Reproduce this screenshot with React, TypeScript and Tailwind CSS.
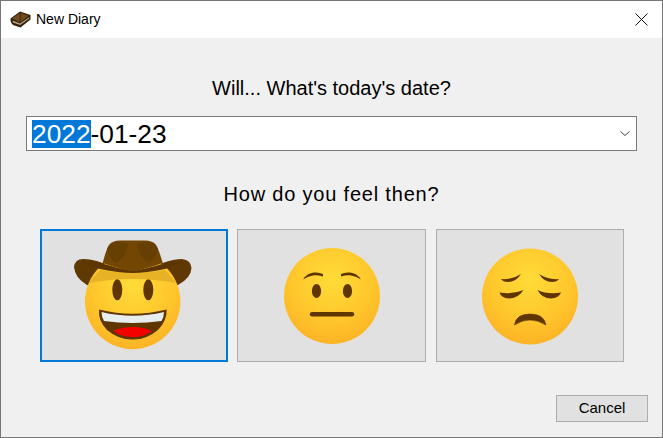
// New Diary dialog
const UI_FONT = "font-['Liberation_Sans',Arial,sans-serif]";

function BookIcon() {
    return (
        <svg width="21" height="17" viewBox="0 0 21 17" className="shrink-0">
            <path d="M0.5 7.5 L10 0.5 L20.5 4 L20.5 8.5 L10.5 16.5 L3 14 Q0 11 0.5 7.5 Z" fill="#33200c" />
            <path d="M2 7.5 L10.3 1.7 L19 4.8 L10 11.5 Z" fill="#6f4a1e" />
            <path d="M2.5 9.5 L10 12.6 L19.2 6.3 L19.2 7.6 L10.2 14 L3 11.6 Z" fill="#b9a688" />
            <path d="M10.3 2 L10 11.2" stroke="#33200c" strokeWidth="0.8" fill="none" />
        </svg>
    );
}

function FaceDefs({ id }: { id: string }) {
    return (
        <defs>
            <radialGradient id={id} cx="50%" cy="32%" r="72%">
                <stop offset="0%" stopColor="#ffdc38" />
                <stop offset="60%" stopColor="#ffc62c" />
                <stop offset="100%" stopColor="#fbb024" />
            </radialGradient>
        </defs>
    );
}

function CowboyFace() {
    return (
        <svg viewBox="0 0 120 120" className="w-[120px] h-[120px]">
            <FaceDefs id="cowboy" />
            {/* brim behind the face */}
            <path d="M0 31 Q1 23 9 23 Q18 23 28.7 27 L88.7 27 Q100 23 108 23 Q117 24 117.5 32 Q117 42 104 49 L13 49 Q1 42 0 31 Z" fill="#5f3802" />
            <circle cx="58.7" cy="65.5" r="47.7" fill="url(#cowboy)" />
            <path d="M26 34 Q58.7 40 91 34 Q98 41 102 47 Q58.7 39 15 47 Q20 40 26 34 Z" fill="#e8b226" />
            {/* brim front */}
            <path d="M7 27 Q18 24 30 28 Q45 33 58.7 35 Q72 33 88 28 Q100 24 110 27 Q100 30 91 33 Q72 37 58.7 37 Q45 37 26 33 Q16 29 7 27 Z" fill="#5c3502" />
            {/* crown */}
            <path d="M28.7 27 Q32 14 35 9 Q38 4.5 46 4.5 L71 4.5 Q79 4.5 82 9 Q85 14 88.7 27 Q72 33 58.7 35.5 Q45 33 28.7 27 Z" fill="#744604" />
            <path d="M33 13 Q36 6 44 6 Q50 6 54 8 Q52 22 42 27 Q36 24 33 13 Z M63 8 Q68 6 73 6 Q81 6 84 13 Q81 24 75 27 Q65 22 63 8 Z" fill="#683f03" />
            <ellipse cx="43.3" cy="53.8" rx="5" ry="10.5" fill="#5f3600" />
            <ellipse cx="74.3" cy="53.8" rx="5" ry="10.5" fill="#5f3600" />
            <path d="M25 73.5 Q58.7 82 92.7 73.5 Q93 85 84 94 Q72 104 58.7 103.5 Q45 104 33 94 Q24 85 25 73.5 Z" fill="#5f3600" />
            <path d="M27.5 76 Q58.7 83.5 90 76 Q90 81 87.5 85 Q58.7 89 30 85 Q27.5 81 27.5 76 Z" fill="#e8eef0" />
            <path d="M39.3 95 Q47 91 58.7 91 Q70 91 77.7 95 Q70 101 58.7 101 Q47 101 39.3 95 Z" fill="#f40000" />
        </svg>
    );
}

function NeutralFace() {
    return (
        <svg viewBox="0 0 120 120" className="w-[120px] h-[120px]">
            <FaceDefs id="neutral" />
            <circle cx="60" cy="60" r="48" fill="url(#neutral)" />
            <path d="M31 43.5 Q35 37 42 36.5 Q47 36 51 38 L51 40.5 Q46 39 42 39.3 Q36 40 31 43.5 Z" fill="#5f3600" />
            <path d="M89 43.5 Q85 37 78 36.5 Q73 36 69 38 L69 40.5 Q74 39 78 39.3 Q84 40 89 43.5 Z" fill="#5f3600" />
            <ellipse cx="44.5" cy="55" rx="4.6" ry="7" fill="#5f3600" />
            <ellipse cx="75.5" cy="55" rx="4.6" ry="7" fill="#5f3600" />
            <rect x="37.8" y="76" width="44.4" height="4.6" rx="2.3" fill="#5f3600" />
        </svg>
    );
}

function PensiveFace() {
    return (
        <svg viewBox="0 0 120 120" className="w-[120px] h-[120px]">
            <FaceDefs id="pensive" />
            <circle cx="60" cy="60.5" r="48" fill="url(#pensive)" />
            <path d="M31 43 Q42 44 51 38 Q46 46 38 46 Q33 46 31 43 Z" fill="#5f3600" />
            <path d="M89 43 Q78 44 69 38 Q74 46 82 46 Q87 46 89 43 Z" fill="#5f3600" />
            <path d="M29.5 56.5 Q42 59 53.5 54 Q48 62.5 39 62.5 Q31 62 29.5 56.5 Z" fill="#5f3600" />
            <path d="M91 56.5 Q78 59 67.5 54 Q72 62.5 81 62.5 Q89 62 91 56.5 Z" fill="#5f3600" />
            <path d="M44.5 89 Q46 78 60 78 Q74 78 76 89 Q68 84 60 84 Q52 84 44.5 89 Z" fill="#5f3600" stroke="#5f3600" strokeWidth="0.6" strokeLinejoin="round" />
        </svg>
    );
}

export default function App() {
    return (
        <div className={`w-[663px] h-[438px] flex flex-col bg-[#f0f0f0] border border-[#767676] ${UI_FONT}`}>
            {/* title bar */}
            <div className="h-[37px] bg-white flex items-center pl-[9px] pr-[14px] shrink-0">
                <BookIcon />
                <span className="ml-[5px] text-[14px] text-black">New Diary</span>
                <svg width="13" height="13" viewBox="0 0 13 13" className="ml-auto">
                    <path d="M0.5 0.5 L12.5 12.5 M12.5 0.5 L0.5 12.5" stroke="#111" strokeWidth="1" fill="none" />
                </svg>
            </div>

            <div className="flex-1 flex flex-col">
                <p className="mt-[37px] h-[27px] leading-[27px] text-center text-[20px] text-black">
                    Will... What's today's date?
                </p>

                {/* date picker */}
                <div className="mt-[14px] ml-[25px] w-[611px] h-[35px] bg-white border border-[#7a7a7a] flex items-center pl-[5px] pr-[6px] text-[26.3px] text-black">
                    <span className="bg-[#0078d7] text-white h-[28px] leading-[28px]">2022</span>
                    <span className="h-[28px] leading-[28px]">-01-23</span>
                    <svg width="10" height="5" viewBox="0 0 10 5" className="ml-auto">
                        <path d="M0.5 0.5 L5 4.5 L9.5 0.5" stroke="#444" strokeWidth="1" fill="none" />
                    </svg>
                </div>

                <p className="mt-[30px] h-[27px] leading-[27px] text-center text-[20px] tracking-[0.8px] text-black">
                    How do you feel then?
                </p>

                {/* mood buttons */}
                <div className="mt-[21px] ml-[39px] flex gap-[9px]">
                    <button type="button" className="w-[188px] h-[133px] bg-[#e1e1e1] border-2 border-[#0078d7] flex items-center justify-center">
                        <CowboyFace />
                    </button>
                    <button type="button" className="w-[189px] h-[133px] bg-[#e1e1e1] border border-[#adadad] flex items-center justify-center">
                        <NeutralFace />
                    </button>
                    <button type="button" className="ml-px w-[188px] h-[133px] bg-[#e1e1e1] border border-[#adadad] flex items-center justify-center">
                        <PensiveFace />
                    </button>
                </div>

                <div className="mt-[33px] pr-[14px] flex justify-end">
                    <button type="button" className="w-[92px] h-[27px] bg-[#e1e1e1] border border-[#adadad] text-[15px] text-black">
                        Cancel
                    </button>
                </div>
            </div>
        </div>
    );
}
